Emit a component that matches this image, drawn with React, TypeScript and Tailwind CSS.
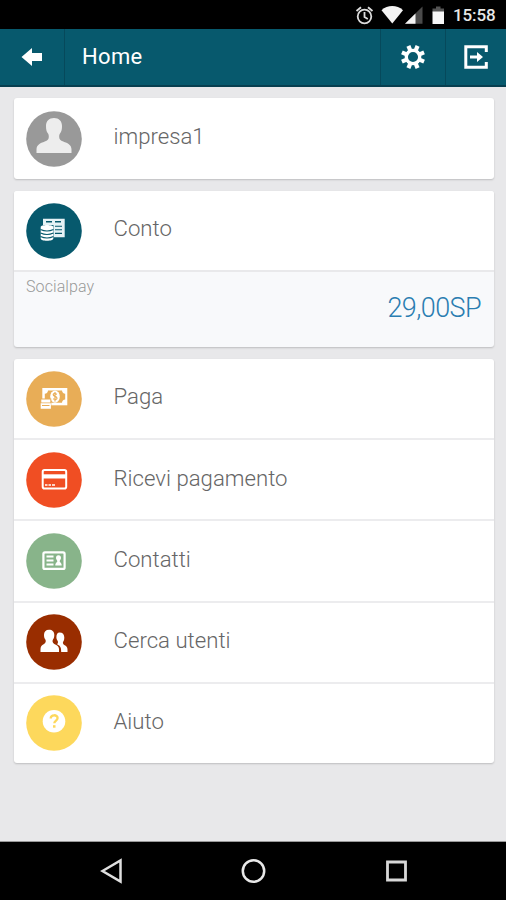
import type { ReactNode } from 'react';

const StatusBar = () => {
  return (
    <div className="flex h-[29px] items-center justify-end bg-black pr-[9px] text-[#e8e8e8]">
      <svg width="96" height="29" viewBox="0 0 96 29" className="mr-[5px]">
        {/* alarm clock */}
        <g fill="none" stroke="#dcdcdc" strokeWidth="1.8">
          <circle cx="12.5" cy="16.5" r="6.8" />
          <path d="M12.5 12v5l3.3 2M4.500 11l4.500-3.800M20.500 11 16 7.200" />
        </g>
        {/* wifi */}
        <path d="M29.500 10.200C35.500 4.700 45 4.700 51 10.200L40.300 23.500z" fill="#f4f4f4" />
        {/* signal */}
        <path d="M70.500 6.500v17.300H53z" fill="#4a4a4a" />
        <path d="M63.500 13.400v10.400H53z" fill="#f4f4f4" />
        {/* battery */}
        <path d="M84 6.500h4.500v2H92v4H80.500v-4H84z" fill="#555" />
        <path d="M80.500 11.500H92v12.500H80.500z" fill="#f7f7f7" />
      </svg>
      <span className="mt-[2px] w-[44px] text-[17px] font-medium tracking-[-0.1px]">15:58</span>
    </div>
  );
};

const teeth = [22.5, 67.5, 112.5, 157.5, 202.5, 247.5, 292.5, 337.5];

const Header = () => {
  return (
    <header className="flex h-[58px] border-b-2 border-[#073f50] bg-[#07596d] text-white">
      <div className="flex w-[65px] items-center justify-center border-r border-[#06495b]">
        <svg width="22" height="20" viewBox="0 0 22 20" className="-mt-px">
          <path d="M.5 10 11 1v5h10v8H11v5z" fill="#fff" />
        </svg>
      </div>
      <h1 className="flex-1 pl-[17px] pt-[14px] text-[22px] leading-7 font-normal tracking-[0.35px]">Home</h1>
      <div className="flex w-[65px] items-center justify-center border-l border-[#06495b]">
        <svg width="26" height="26" viewBox="-13 -13 26 26" className="-ml-px -mt-px">
          <circle r="6.700" fill="none" stroke="#fff" strokeWidth="3.300" />
          <g fill="#fff">
            {teeth.map((angle) => (
              <path key={angle} d="M-2.100-12h4.200v5h-4.200z" transform={`rotate(${angle})`} />
            ))}
          </g>
        </svg>
      </div>
      <div className="flex w-[61px] items-center justify-center border-l border-[#06495b]">
        <svg width="24" height="24" viewBox="0 0 24 24" className="-mt-px">
          <path d="M22.300 7V1.800H1.800v20.400h20.500V17" fill="none" stroke="#fff" strokeWidth="3" />
          <path d="M6 10.500h7V7l6 5-6 5v-3.500H6z" fill="#fff" />
        </svg>
      </div>
    </header>
  );
};

const PersonIcon = () => (
  <path
    d="M28 7c-5 0-8 3-8 8 0 3 .4 5.500 2 7.500.7 1 .8 2 .8 3.500 0 2.500-1.300 3.500-4 4.500-4.800 1.800-8.300 3.300-8.300 8v3.500H45.500V38.500c0-4.700-3.500-6.200-8.300-8-2.700-1-4-2-4-4.500 0-1.500.1-2.500.8-3.500 1.600-2 2-4.500 2-7.500 0-5-3-8-8-8z"
    fill="#ededed"
  />
);

const AccountIcon = () => (
  <g>
    <path d="M17 15.700h21.700v18.600H27.500V22H17z" fill="#e6f2f5" />
    <path d="M20 18.700h6M29 18.700h6" stroke="#07596d" strokeWidth="1.600" />
    <path d="M29 23.200h7M29 26.800h7M29 30.400h7" stroke="#07596d" strokeWidth="1.100" />
    <path d="M14.700 24c0-1.200 2.800-2 6.300-2s6.300.8 6.300 2v11.500c0 1.300-2.800 2.300-6.300 2.300s-6.300-1-6.300-2.300z" fill="#fff" />
    <path d="M14.500 26.500q6.500 3 13 0M14.500 30q6.500 3 13 0M14.500 33.500q6.500 3 13 0" fill="none" stroke="#07596d" strokeWidth="1.100" />
  </g>
);

const PayIcon = () => (
  <g>
    <path d="M16.300 17h25v17.300h-25z" fill="#fff" />
    <path d="M22 19.500h14q.3 3 3.200 3.200v5.800q-3 .3-3.200 3.200H22q-.3-3-3.200-3.200v-5.800q3-.3 3.200-3.200z" fill="#e8ad57" />
    <ellipse cx="29" cy="25.600" rx="4.800" ry="6.100" fill="#fff" />
    <path d="M31 23.300q-3.800-1.500-3.800.4c0 2 3.800 1.400 3.800 3.500 0 1.700-2.300 1.600-3.900.6M29 21v9.500" fill="none" stroke="#e8ad57" strokeWidth="1.200" />
    <path d="M14.300 27.500h11v10.400h-11z" fill="#e8ad57" />
    <path d="M15.300 28.500h9v3h-9zM14.700 32.200h10.200v5.500H14.700z" fill="#fff" />
    <path d="M16 34.500h7.500" stroke="#e8ad57" strokeWidth="1" />
  </g>
);

const CreditCardIcon = () => (
  <g>
    <rect x="16.700" y="18" width="23.500" height="18.500" rx="1.800" fill="none" stroke="#fff" strokeWidth="2" />
    <path d="M17 22.300h23v4.200H17z" fill="#fff" />
    <path d="M19 33h2.500M22.500 33h2.500M26 33h3" stroke="#fff" strokeWidth="1.600" />
  </g>
);

const ContactsIcon = () => (
  <g>
    <rect x="17.400" y="19.400" width="21.200" height="16.500" rx="1.500" fill="none" stroke="#fff" strokeWidth="2.200" />
    <path d="M20.500 23.600h7M20.500 27.600h7M20.500 31.600h7" stroke="#fff" strokeWidth="2" />
    <path d="M32.500 22.200c-1.800 0-2.500 1.200-2.500 2.700 0 1.700 1.300 2.200 1.300 3.300 0 1.200-2 1.300-2 4.300h6.400c0-3-2-3.100-2-4.300 0-1.100 1.300-1.600 1.300-3.300 0-1.500-.7-2.700-2.500-2.700z" fill="#fff" />
  </g>
);

const UsersIcon = () => (
  <g fill="#fff">
    <path d="M33.500 18.500c3.200 0 4.800 1.900 4.800 5 0 2-.4 3.100-1 4.100-.8 1.200-.4 2.600 1 3.400 2 1 3.200 2 3.200 4.500V38h-6.300c0-4.500-.6-5.800-4.100-7.700.8-1 1.300-2.200.5-3.600-.8-1-1.200-2-1.200-3.400 0-3 1.100-4.800 3.100-4.800z" />
    <path d="M23 15.700c-3.200 0-5 2-5 5 0 2.200.4 3.500 1.200 4.500 1 1.500.7 3.800-1.200 4.700-2.500 1.200-3.300 2.300-3.500 5V38H33v-3c-.2-2.700-1.700-3.800-4.700-5.100-1.900-.9-2.200-3.200-1.200-4.700.8-1 1.200-2.300 1.200-4.500 0-3-2-5-5.300-5z" />
  </g>
);

const HelpIcon = () => (
  <g>
    <circle cx="28" cy="26.200" r="11.300" fill="#fff" />
    <path d="M24.700 23.600c0-4.500 6.900-4.200 6.900-.5 0 2.400-3.300 2.500-3.300 5.200" fill="none" stroke="#fdd85c" strokeWidth="2.300" />
    <path d="M27 30.200h2.500v2.500H27z" fill="#fdd85c" />
  </g>
);

type RowProps = {
  label: string;
  color: string;
  children: ReactNode;
};

const Row = ({ label, color, children }: RowProps) => {
  return (
    <li className="flex flex-1 items-center pl-3">
      <svg width="56" height="56" viewBox="0 0 56 56" className="shrink-0">
        <circle cx="28" cy="28" r="27.800" fill={color} />
        {children}
      </svg>
      <span className="-mt-[3px] pl-[31.500px] text-[22.200px] font-light text-[#666]">{label}</span>
    </li>
  );
};

const App = () => {
  return (
    <div className="flex h-[900px] w-[506px] flex-col bg-[#e8e8ea] font-['Roboto',sans-serif]">
      <StatusBar />
      <Header />

      <main className="flex flex-1 flex-col gap-3 border-b border-[#999] pl-[14px] pr-3 pt-[11px]">
        <ul className="flex h-[81px] flex-col rounded-[3px] bg-white shadow-[0_1px_2px_#00000030]">
          <Row label="impresa1" color="#999999">
            <PersonIcon />
          </Row>
        </ul>

        <section className="h-[156px] overflow-hidden rounded-[3px] bg-[#f8f9fb] shadow-[0_1px_2px_#00000030]">
          <ul className="flex h-[81px] flex-col border-b-2 border-[#e9e9eb] bg-white">
            <Row label="Conto" color="#07596d">
              <AccountIcon />
            </Row>
          </ul>
          <div className="pl-3 pr-[13px] pt-[5px]">
            <p className="text-base leading-5 font-light tracking-[0.1px] text-[#999]">Socialpay</p>
            <p className="text-right text-[27px] leading-[22px] font-light tracking-[-0.6px] text-[#2a7db1]">29,00SP</p>
          </div>
        </section>

        <ul className="flex h-[404px] flex-col divide-y-2 divide-[#ececee] rounded-[3px] bg-white shadow-[0_1px_2px_#00000030]">
          <Row label="Paga" color="#e8ad57">
            <PayIcon />
          </Row>
          <Row label="Ricevi pagamento" color="#f04e23">
            <CreditCardIcon />
          </Row>
          <Row label="Contatti" color="#88b48a">
            <ContactsIcon />
          </Row>
          <Row label="Cerca utenti" color="#992d00">
            <UsersIcon />
          </Row>
          <Row label="Aiuto" color="#fdd85c">
            <HelpIcon />
          </Row>
        </ul>
      </main>

      <nav className="flex h-[58px] items-center justify-between bg-black pl-[100px] pr-[98px]">
        <svg width="24" height="26" viewBox="0 0 24 26">
          <path d="M2.500 13 20.500 2.500v21z" fill="none" stroke="#e0e0e0" strokeWidth="2.500" />
        </svg>
        <svg width="26" height="26" viewBox="0 0 26 26">
          <circle cx="12.500" cy="13" r="10.700" fill="none" stroke="#e8e8e8" strokeWidth="2.500" />
        </svg>
        <svg width="24" height="26" viewBox="0 0 24 26">
          <path d="M3.500 4h18v18h-18z" fill="none" stroke="#d8d8d8" strokeWidth="2.800" />
        </svg>
      </nav>
    </div>
  );
};

export default App;
